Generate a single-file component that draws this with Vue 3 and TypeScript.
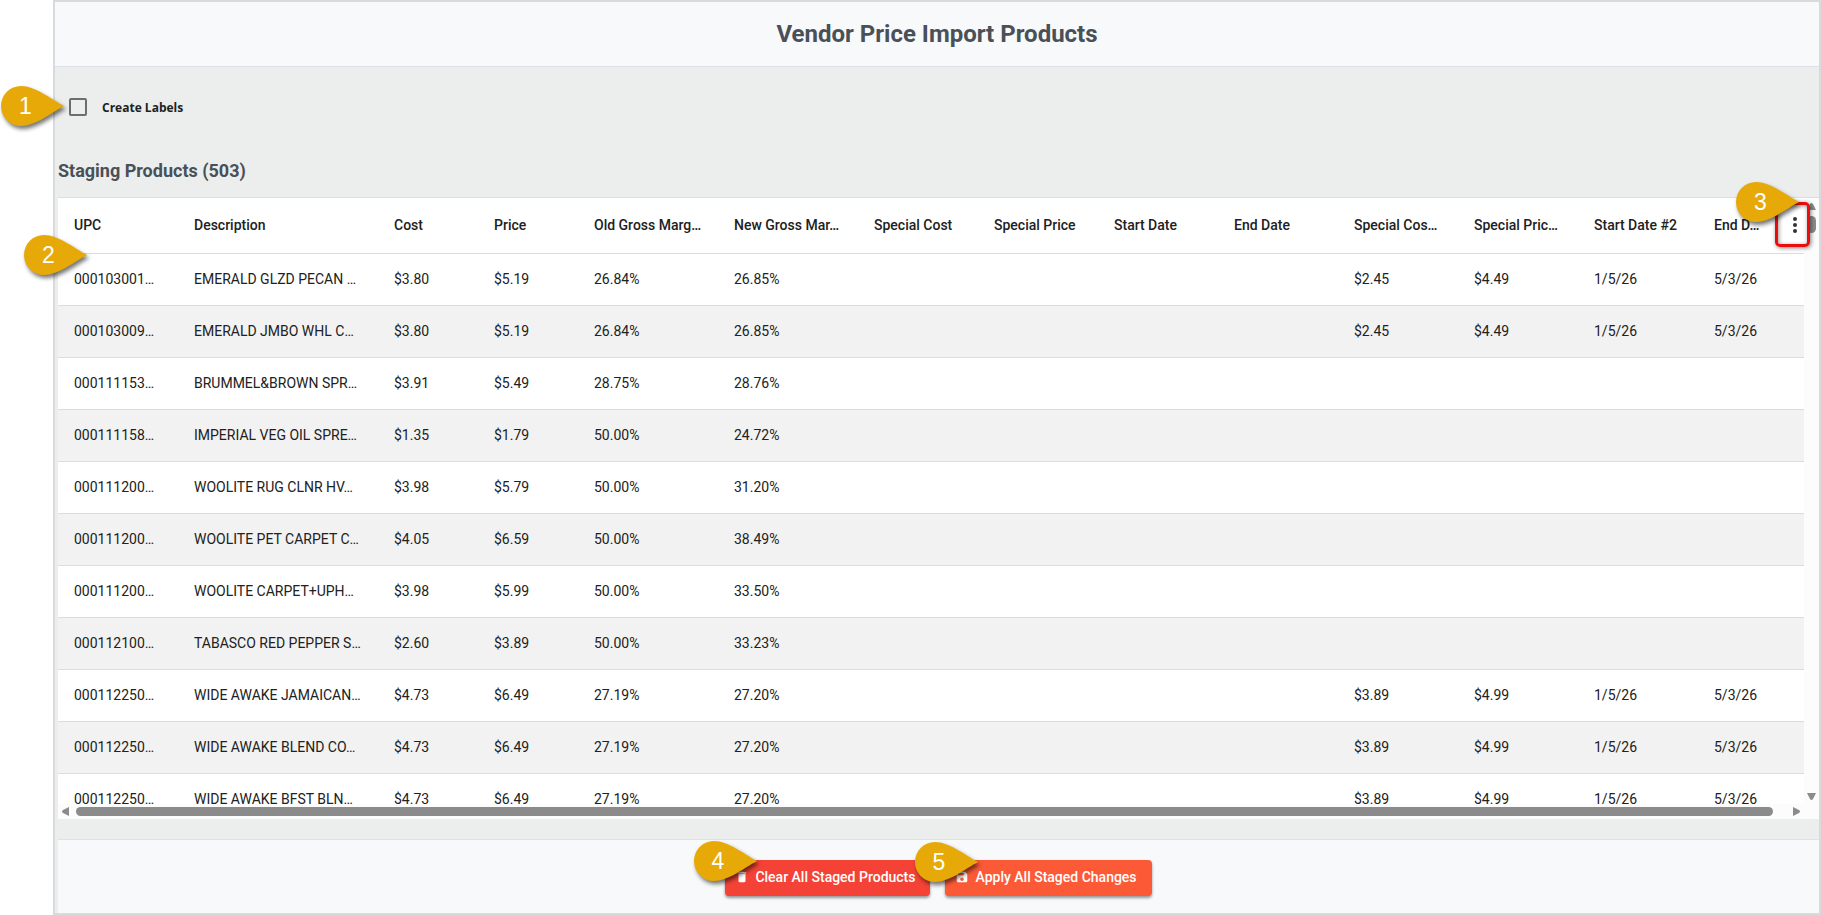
<script setup lang="ts">
import { ref } from 'vue'

interface Column {
  label: string
  width: string
}

const createLabels = ref(false)

const columns: Column[] = [
  { label: 'UPC', width: 'w120' },
  { label: 'Description', width: 'w200' },
  { label: 'Cost', width: 'w100' },
  { label: 'Price', width: 'w100' },
  { label: 'Old Gross Marg…', width: 'w140' },
  { label: 'New Gross Mar…', width: 'w140' },
  { label: 'Special Cost', width: 'w120' },
  { label: 'Special Price', width: 'w120' },
  { label: 'Start Date', width: 'w120' },
  { label: 'End Date', width: 'w120' },
  { label: 'Special Cos…', width: 'w120' },
  { label: 'Special Pric…', width: 'w120' },
  { label: 'Start Date #2', width: 'w120' },
  { label: 'End D…', width: 'rest' },
]

const none = ['', '', '', '']
const dates = ['1/5/26', '5/3/26']

const rows: string[][] = [
  ['000103001…', 'EMERALD GLZD PECAN …', '$3.80', '$5.19', '26.84%', '26.85%', ...none, '$2.45', '$4.49', ...dates],
  ['000103009…', 'EMERALD JMBO WHL C…', '$3.80', '$5.19', '26.84%', '26.85%', ...none, '$2.45', '$4.49', ...dates],
  ['000111153…', 'BRUMMEL&BROWN SPR…', '$3.91', '$5.49', '28.75%', '28.76%', ...none, ...none],
  ['000111158…', 'IMPERIAL VEG OIL SPRE…', '$1.35', '$1.79', '50.00%', '24.72%', ...none, ...none],
  ['000111200…', 'WOOLITE RUG CLNR HV…', '$3.98', '$5.79', '50.00%', '31.20%', ...none, ...none],
  ['000111200…', 'WOOLITE PET CARPET C…', '$4.05', '$6.59', '50.00%', '38.49%', ...none, ...none],
  ['000111200…', 'WOOLITE CARPET+UPH…', '$3.98', '$5.99', '50.00%', '33.50%', ...none, ...none],
  ['000112100…', 'TABASCO RED PEPPER S…', '$2.60', '$3.89', '50.00%', '33.23%', ...none, ...none],
  ['000112250…', 'WIDE AWAKE JAMAICAN…', '$4.73', '$6.49', '27.19%', '27.20%', ...none, '$3.89', '$4.99', ...dates],
  ['000112250…', 'WIDE AWAKE BLEND CO…', '$4.73', '$6.49', '27.19%', '27.20%', ...none, '$3.89', '$4.99', ...dates],
  ['000112250…', 'WIDE AWAKE BFST BLN…', '$4.73', '$6.49', '27.19%', '27.20%', ...none, '$3.89', '$4.99', ...dates],
]

const callouts = [1, 2, 3, 4, 5]
</script>

<template>
  <div class="page">
    <main class="panel">
      <header class="panel-head">
        <h1>Vendor Price Import Products</h1>
      </header>

      <section class="body">
        <label class="check">
          <input v-model="createLabels" type="checkbox" />
          <span>Create Labels</span>
        </label>

        <h2>Staging Products (503)</h2>

        <div class="grid">
          <div class="viewport">
            <table>
              <colgroup>
                <col v-for="c in columns" :key="c.label" :class="c.width" />
              </colgroup>
              <thead>
                <tr>
                  <th v-for="c in columns" :key="c.label" scope="col">{{ c.label }}</th>
                </tr>
              </thead>
              <tbody>
                <tr v-for="(row, i) in rows" :key="i">
                  <td v-for="(cell, j) in row" :key="j">{{ cell }}</td>
                </tr>
              </tbody>
            </table>
            <button class="menu" type="button" aria-label="Column menu">
              <svg viewBox="0 0 24 24" width="24" height="24">
                <circle cx="12" cy="6" r="2" />
                <circle cx="12" cy="12" r="2" />
                <circle cx="12" cy="18" r="2" />
              </svg>
            </button>
          </div>
          <div class="vbar">
            <svg width="9" height="7" viewBox="0 0 9 7"><path d="M0 7 L3 1 Q4.500 -1 6 1 L9 7Z" /></svg>
            <div class="vthumb"></div>
            <svg class="down" width="9" height="7" viewBox="0 0 9 7"><path d="M0 0H9L6 6Q4.500 8 3 6Z" /></svg>
          </div>
          <div class="hbar">
            <svg width="7" height="9" viewBox="0 0 7 9"><path d="M7 0V9L1 6Q-1 4.500 1 3Z" /></svg>
            <div class="hthumb"></div>
            <svg width="7" height="9" viewBox="0 0 7 9"><path d="M0 0V9L6 6Q8 4.500 6 3Z" /></svg>
          </div>
          <div class="corner"></div>
        </div>
      </section>

      <footer class="actions">
        <button class="btn clear" type="button">
          <svg width="14" height="14" viewBox="0 0 24 24">
            <path d="M6 19c0 1.100.9 2 2 2h8c1.100 0 2-.9 2-2V7H6v12zM19 4h-3.500l-1-1h-5l-1 1H5v2h14V4z" />
          </svg>
          <span>Clear All Staged Products</span>
        </button>
        <button class="btn apply" type="button">
          <svg width="14" height="14" viewBox="0 0 24 24">
            <path d="M17 3H5c-1.110 0-2 .9-2 2v14c0 1.100.89 2 2 2h14c1.100 0 2-.9 2-2V7l-4-4zm-5 16c-1.660 0-3-1.340-3-3s1.340-3 3-3 3 1.340 3 3-1.340 3-3 3zm3-10H5V5h10v4z" />
          </svg>
          <span>Apply All Staged Changes</span>
        </button>
      </footer>
    </main>

    <div class="highlight"></div>
    <div v-for="n in callouts" :key="n" class="callout" :class="'c' + n">
      <svg width="63" height="40" viewBox="0 0 63 40">
        <path d="M20 0C34 0 50 13 63 20C50 27 34 40 20 40A20 20 0 0 1 20 0Z" />
      </svg>
      <span>{{ n }}</span>
    </div>
  </div>
</template>

<style>
body {
  margin: 0;
  background: #fff;
}
</style>

<style scoped>
.page {
  position: relative;
  box-sizing: border-box;
  min-height: 100vh;
  padding-left: 53px;
  display: flex;
  overflow: hidden;
  font-family: Roboto, "Liberation Sans", sans-serif;
  font-size: 14px;
  color: #212121;
}
.panel {
  flex: 1;
  min-width: 0;
  display: flex;
  flex-direction: column;
  border: 2px solid #d9dada;
  background: #ebeeed;
}
.panel-head {
  display: flex;
  justify-content: center;
  height: 64px;
  background: #f8f9fb;
  border-bottom: 1px solid #dde0e8;
}
h1 {
  margin: 0;
  font-size: 24px;
  line-height: 64px;
  color: #495057;
}
.body {
  flex: 1;
  display: flex;
  flex-direction: column;
  padding-left: 3px;
}
.check {
  display: flex;
  align-items: center;
  align-self: flex-start;
  gap: 15px;
  height: 20px;
  margin: 30px 0 0 11px;
  font: 700 12px/20px "Open Sans", sans-serif;
}
.check span {
  padding-top: 2px;
}
.check input {
  appearance: none;
  box-sizing: border-box;
  width: 18px;
  height: 18px;
  margin: 0;
  border: 2px solid #6c6e6e;
  border-radius: 2px;
}
h2 {
  margin: 42px 0 14px;
  font-size: 18px;
  line-height: 24px;
  color: #495057;
}
.grid {
  flex: 1;
  display: grid;
  grid-template-columns: minmax(0, 1fr) 15px;
  grid-template-rows: minmax(0, 606px) 15px;
  border-top: 1px solid #dcdfde;
}
.viewport {
  position: relative;
  overflow: hidden;
  background: #fff;
}
table {
  width: 100%;
  table-layout: fixed;
  border-collapse: separate;
  border-spacing: 0;
}
.w100 { width: 100px; }
.w120 { width: 120px; }
.w140 { width: 140px; }
.w200 { width: 200px; }
th,
td {
  box-sizing: border-box;
  height: 52px;
  padding: 0 0 2px 16px;
  border-bottom: 1px solid #dcdcdc;
  text-align: left;
  white-space: nowrap;
  font-weight: 400;
}
th {
  height: 56px;
  font-weight: 500;
}
tbody tr:nth-child(even) {
  background: #f2f2f2;
}
.menu {
  position: absolute;
  top: 15px;
  right: -3px;
  width: 24px;
  height: 24px;
  padding: 0;
  border: 0;
  background: none;
}
.menu svg {
  display: block;
  fill: #333;
}
.vbar,
.hbar {
  display: flex;
  align-items: center;
  background: #fcfcfc;
}
.vbar {
  flex-direction: column;
  padding: 5px 0 4px;
}
.hbar {
  padding: 0 4px;
  gap: 7px;
}
.corner {
  background: #fcfcfc;
}
.vbar svg,
.hbar svg {
  flex: none;
  fill: #8b8b8b;
}
.vthumb {
  width: 9px;
  height: 17px;
  margin-top: 6px;
  border-radius: 5px;
  background: #8b8b8b;
}
.vbar .down {
  margin-top: auto;
}
.hthumb {
  flex: 1;
  height: 9px;
  margin-right: 13px;
  border-radius: 5px;
  background: #8b8b8b;
}
.actions {
  display: flex;
  justify-content: center;
  align-items: flex-start;
  gap: 15px;
  height: 53px;
  margin-left: 3px;
  padding-top: 20px;
  background: #f8f9fb;
  border-top: 1px solid #dfe1e2;
}
.btn {
  display: flex;
  align-items: center;
  height: 36px;
  padding: 0 15px 2px 10px;
  gap: 6px;
  border: 0;
  border-radius: 4px;
  color: #fff;
  font: 500 14px/34px Roboto, sans-serif;
  box-shadow: 0 2px 3px rgba(0, 0, 0, 0.4);
}
.btn svg {
  fill: #fff;
}
.clear { background: #f44336; }
.apply { background: #fc5a37; }
.highlight {
  position: absolute;
  top: 202px;
  right: 11px;
  box-sizing: border-box;
  width: 35px;
  height: 45px;
  border: 3px solid #ec0c0c;
  border-radius: 5px;
  box-shadow: 1px 1px 4px rgba(0, 0, 0, 0.5), inset 1px 1px 4px rgba(0, 0, 0, 0.4);
}
.callout {
  position: absolute;
  width: 63px;
  height: 40px;
}
.callout svg {
  display: block;
  overflow: visible;
  fill: #e7a908;
  filter: drop-shadow(2px 3px 2px rgba(0, 0, 0, 0.55));
}
.callout span {
  position: absolute;
  inset: 0 14px 0 0;
  text-align: center;
  font: 23px/40px "Liberation Sans", sans-serif;
  color: #fff;
}
.c1 { left: 1px; top: 86px; }
.c2 { left: 24px; top: 235px; }
.c3 { right: 22px; top: 182px; }
.c4 { left: calc(50% - 217px); bottom: 34px; }
.c5 { left: calc(50% + 4px); bottom: 33px; }
</style>
